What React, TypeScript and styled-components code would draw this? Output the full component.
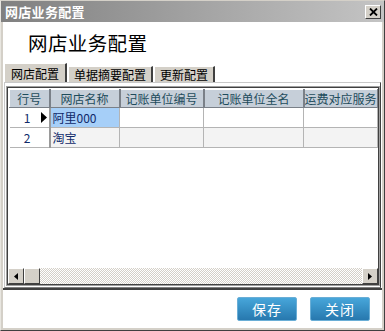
import React from 'react'
import styled, { createGlobalStyle } from 'styled-components'

const GlobalStyle = createGlobalStyle`
  html, body {
    margin: 0;
    padding: 0;
    background: #ffffff;
  }
  body {
    font-family: "Noto Sans CJK SC", "DejaVu Sans", sans-serif;
    font-size: 12px;
  }
`

const Window = styled.div`
  box-sizing: border-box;
  width: 385px;
  height: 331px;
  display: flex;
  flex-direction: column;
  background: #d4d0c8;
  border: 1px solid;
  border-color: #d4d0c8 #404040 #404040 #e8e6e0;
  padding: 0 2px 2px 2px;
`

const TitleBar = styled.div`
  height: 21px;
  margin: 0 -2px;
  display: flex;
  align-items: center;
  justify-content: space-between;
  padding: 0 3px 0 4px;
  background: linear-gradient(to right, #808080, #c4c4c4);
  color: #ffffff;
  font-weight: bold;
  font-size: 13px;
  line-height: 21px;
  letter-spacing: 0.3px;
`

const CloseButton = styled.div`
  box-sizing: border-box;
  width: 16px;
  height: 14px;
  background: #d4d0c8;
  border: 1px solid;
  border-color: #ffffff #404040 #404040 #ffffff;
  display: flex;
  align-items: center;
  justify-content: center;
`

const Body = styled.div`
  flex: 1;
  display: flex;
  flex-direction: column;
  background: #ffffff;
`

const Heading = styled.div`
  height: 41px;
  padding-left: 25px;
  display: flex;
  align-items: center;
  font-size: 19.5px;
  color: #000000;
  letter-spacing: 0.4px;
`

const TabStrip = styled.div`
  height: 19px;
  display: flex;
  align-items: flex-end;
  padding-left: 1px;
`

const Tab = styled.div<{ $active?: boolean }>`
  box-sizing: border-box;
  height: ${p => (p.$active ? 19 : 16)}px;
  padding: 0 ${p => (p.$active ? 6 : 5)}px;
  margin-right: 1px;
  background: #d4d0c8;
  border-top: 1px solid #ffffff;
  border-left: 1px solid #ffffff;
  border-right: 2px solid #404040;
  display: flex;
  align-items: center;
  font-size: 12px;
  color: #000000;
  white-space: nowrap;
`

const Panel = styled.div`
  box-sizing: border-box;
  height: 206px;
  margin: 0 1px;
  border: 1px solid;
  border-color: #c8c8c8 #404040 #808080 #c8c8c8;
  padding: 4px 1px 2px 2px;
  display: flex;
`

const GridBox = styled.div`
  flex: 1;
  box-sizing: border-box;
  border: 1px solid #404040;
  box-shadow: 0 0 0 1px #a0a0a0;
  display: flex;
  flex-direction: column;
  background: #ffffff;
  overflow: hidden;
`

const GridScroll = styled.div`
  flex: 1;
  overflow: hidden;
  padding: 1px 0 0 1px;
`

const Table = styled.table`
  border-collapse: collapse;
  table-layout: fixed;
  width: 368px;
`

const HeadCell = styled.th<{ $align?: string }>`
  box-sizing: border-box;
  height: 18px;
  padding: 0 ${p => (p.$align === 'left' ? 0 : 2)}px;
  background: #c6cfd9;
  color: #1e4c5c;
  font-weight: normal;
  font-size: 12px;
  text-align: ${p => p.$align || 'center'};
  white-space: nowrap;
  overflow: hidden;
  border-top: 1px solid #ffffff;
  border-left: 1px solid #ffffff;
  border-right: 2px solid #7a8088;
  border-bottom: 1px solid #7a8088;
`

const RowHead = styled.td`
  box-sizing: border-box;
  height: 20px;
  padding: 0;
  background: #ffffff;
  border-right: 2px solid #9a9a9a;
  border-bottom: 1px solid #b4b4b4;
`

const RowHeadInner = styled.div`
  display: flex;
  align-items: center;
  justify-content: flex-end;
  color: #102a6a;
  font-size: 12px;
`

const Pointer = styled.span`
  width: 18px;
  display: flex;
  justify-content: flex-end;
  padding-right: 2px;
  box-sizing: border-box;
`

const Cell = styled.td<{ $selected?: boolean; $alt?: boolean }>`
  box-sizing: border-box;
  padding: 0 2px;
  font-size: 12px;
  color: #102a6a;
  white-space: nowrap;
  background: ${p => (p.$selected ? '#a6cff8' : p.$alt ? '#f3f3f3' : '#ffffff')};
  border-right: 1px solid #b4b4b4;
  border-bottom: 1px solid #b4b4b4;
`

const HScroll = styled.div`
  height: 16px;
  display: flex;
  background-color: #ffffff;
  background-image: repeating-conic-gradient(#d4d0c8 0 25%, #ffffff 0 50%);
  background-size: 2px 2px;
`

const ScrollButton = styled.div`
  box-sizing: border-box;
  width: 16px;
  height: 16px;
  background: #d4d0c8;
  border: 1px solid;
  border-color: #ffffff #404040 #404040 #ffffff;
  display: flex;
  align-items: center;
  justify-content: center;
`

const Track = styled.div`
  flex: 1;
`

const Footer = styled.div`
  flex: 1;
  border-top: 2px solid #404040;
  display: flex;
  justify-content: flex-end;
  align-items: flex-start;
  padding: 7px 12px 0 0;
  gap: 13px;
`

const BlueButton = styled.div`
  box-sizing: border-box;
  width: 60px;
  height: 24px;
  border-radius: 2px;
  border: 1px solid #6aaed6;
  background: linear-gradient(to bottom, #47a6da, #2778ae);
  color: #ffffff;
  font-size: 14px;
  display: flex;
  align-items: center;
  justify-content: center;
  letter-spacing: 1px;
`

const columns = [
  { label: '行号', width: 40 },
  { label: '网店名称', width: 70 },
  { label: '记账单位编号', width: 84 },
  { label: '记账单位全名', width: 100 },
  { label: '运费对应服务', width: 74, align: 'left' },
]

const rows = [
  { no: 1, name: '阿里000', current: true },
  { no: 2, name: '淘宝', current: false },
]

const Arrow = ({ dir }: { dir: 'left' | 'right' }) => (
  <svg width="4" height="7" viewBox="0 0 4 7">
    {dir === 'left' ? <path d="M4 0 L0 3.5 L4 7 Z" fill="#000" /> : <path d="M0 0 L4 3.5 L0 7 Z" fill="#000" />}
  </svg>
)

export default function App() {
  return (
    <>
      <GlobalStyle />
      <Window>
        <TitleBar>
          <span>网店业务配置</span>
          <CloseButton>
            <svg width="9" height="8" viewBox="0 0 9 8">
              <path d="M1 0.5 L8 7.5 M8 0.5 L1 7.5" stroke="#000" strokeWidth="1.8" />
            </svg>
          </CloseButton>
        </TitleBar>
        <Body>
          <Heading>网店业务配置</Heading>
          <TabStrip>
            <Tab $active>网店配置</Tab>
            <Tab>单据摘要配置</Tab>
            <Tab>更新配置</Tab>
          </TabStrip>
          <Panel>
            <GridBox>
              <GridScroll>
                <Table>
                  <colgroup>
                    {columns.map(c => (
                      <col key={c.label} style={{ width: c.width }} />
                    ))}
                  </colgroup>
                  <thead>
                    <tr>
                      {columns.map(c => (
                        <HeadCell key={c.label} $align={c.align}>
                          {c.label}
                        </HeadCell>
                      ))}
                    </tr>
                  </thead>
                  <tbody>
                    {rows.map((r, i) => (
                      <tr key={r.no}>
                        <RowHead>
                          <RowHeadInner>
                            {r.no}
                            <Pointer>
                              {r.current && (
                                <svg width="6" height="11" viewBox="0 0 6 11">
                                  <path d="M0 0 L6 5.5 L0 11 Z" fill="#000" />
                                </svg>
                              )}
                            </Pointer>
                          </RowHeadInner>
                        </RowHead>
                        <Cell $selected={r.current} $alt={i % 2 === 1}>
                          {r.name}
                        </Cell>
                        <Cell $alt={i % 2 === 1} />
                        <Cell $alt={i % 2 === 1} />
                        <Cell $alt={i % 2 === 1} />
                      </tr>
                    ))}
                  </tbody>
                </Table>
              </GridScroll>
              <HScroll>
                <ScrollButton>
                  <Arrow dir="left" />
                </ScrollButton>
                <ScrollButton />
                <Track />
                <ScrollButton>
                  <Arrow dir="right" />
                </ScrollButton>
              </HScroll>
            </GridBox>
          </Panel>
          <Footer>
            <BlueButton>保存</BlueButton>
            <BlueButton>关闭</BlueButton>
          </Footer>
        </Body>
      </Window>
    </>
  )
}
